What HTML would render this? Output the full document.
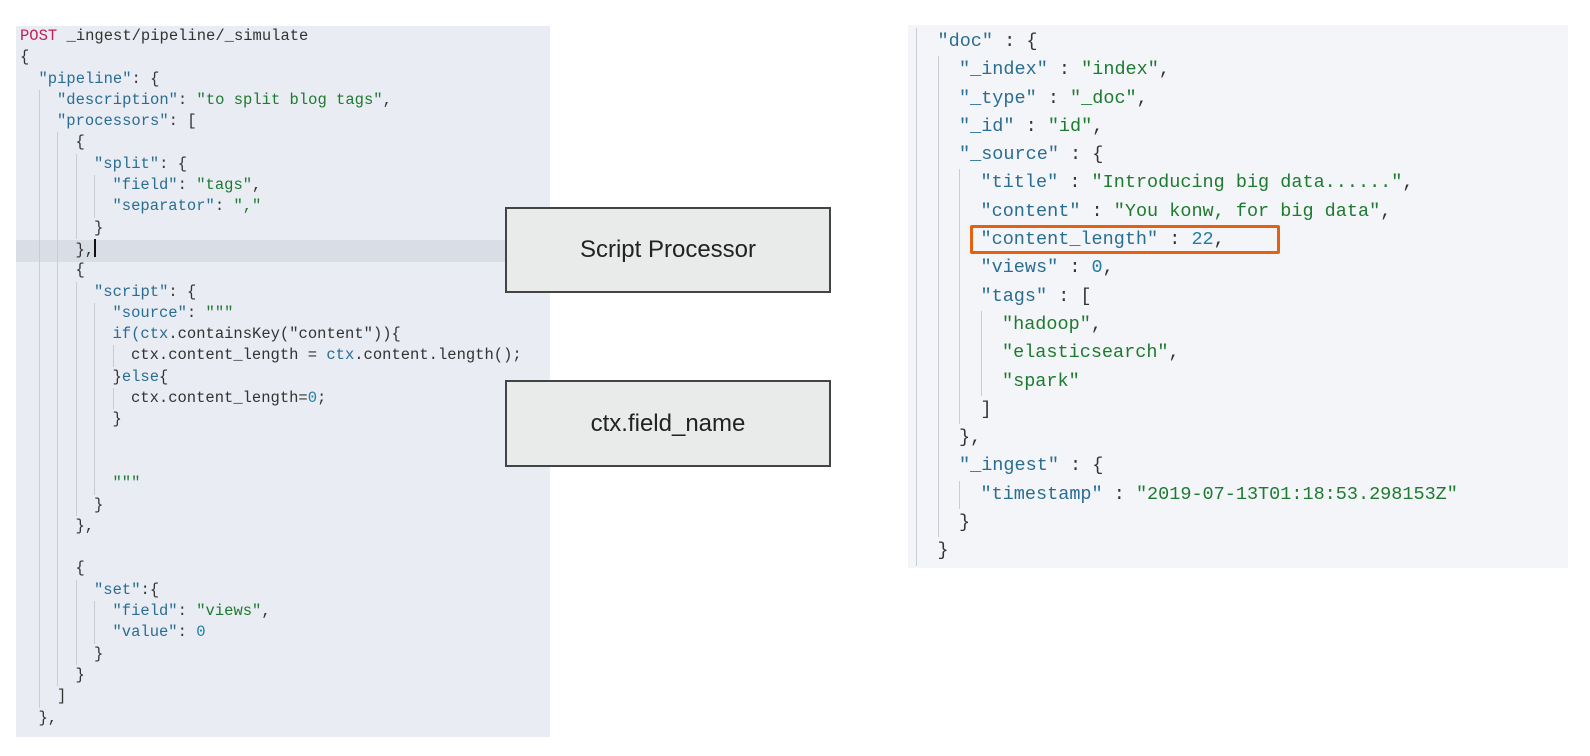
<!DOCTYPE html>
<html><head><meta charset="utf-8"><style>
html,body{margin:0;padding:0;background:#fff;width:1590px;height:756px;overflow:hidden;position:relative}
.panel{position:absolute}
#L{left:16px;top:26px;width:534px;height:711px;background:#e9ecf3}
#R{left:908px;top:25px;width:660px;height:543px;background:#f4f5f8}
.code{position:absolute;font-family:"Liberation Mono",monospace;color:#333}
.code div{white-space:pre}
#lc{left:20px;top:26px;font-size:15.5px;line-height:21.3px}
#rc{left:916px;top:28px;font-size:18.5px;line-height:28.3px}
#lc div{height:21.3px}
#rc div{height:28.3px}
.code b,.code i{display:inline-block;height:100%;vertical-align:top;box-sizing:border-box}
#lc b,#lc i{width:18.5px}
#rc i{width:21.5px}
.code i{border-left:1px solid #c9ccd3}
.k{color:#2a6d93}.s{color:#1d7a2f}.n{color:#1f7ea6}.m{color:#c21d55}
.hl{position:absolute;left:16px;top:240px;width:489px;height:22px;background:#d9dde6}
.cur{display:inline-block;width:2px;height:18px;background:#111;vertical-align:-3px}
.box{position:absolute;left:505px;width:326px;background:#e9ebeb;border:2px solid #444;font-family:"Liberation Sans",sans-serif;font-size:24px;color:#222;display:flex;align-items:center;justify-content:center;box-sizing:border-box}
.ob{position:absolute;left:970px;top:225px;width:310px;height:29px;border:3px solid #e4620f;border-radius:2px;box-sizing:border-box}
</style></head><body>
<div class="panel" id="L"></div>
<div class="hl"></div>
<div class="panel" id="R"></div>
<div class="code" id="lc"><div><span class="m">POST</span> _ingest/pipeline/_simulate</div><div>{</div><div><b></b><span class="k">"pipeline"</span>: {</div><div><b></b><i></i><span class="k">"description"</span>: <span class="s">"to split blog tags"</span>,</div><div><b></b><i></i><span class="k">"processors"</span>: [</div><div><b></b><i></i><i></i>{</div><div><b></b><i></i><i></i><i></i><span class="k">"split"</span>: {</div><div><b></b><i></i><i></i><i></i><i></i><span class="k">"field"</span>: <span class="s">"tags"</span>,</div><div><b></b><i></i><i></i><i></i><i></i><span class="k">"separator"</span>: <span class="s">","</span></div><div><b></b><i></i><i></i><i></i>}</div><div><b></b><i></i><i></i>},<span class="cur"></span></div><div><b></b><i></i><i></i>{</div><div><b></b><i></i><i></i><i></i><span class="k">"script"</span>: {</div><div><b></b><i></i><i></i><i></i><i></i><span class="k">"source"</span>: <span class="s">"""</span></div><div><b></b><i></i><i></i><i></i><i></i><span class="k">if(ctx</span>.containsKey("content")){</div><div><b></b><i></i><i></i><i></i><i></i><i></i>ctx.content_length = <span class="k">ctx</span>.content.length();</div><div><b></b><i></i><i></i><i></i><i></i>}<span class="k">else</span>{</div><div><b></b><i></i><i></i><i></i><i></i><i></i>ctx.content_length=<span class="n">0</span>;</div><div><b></b><i></i><i></i><i></i><i></i>}</div><div><b></b><i></i><i></i><i></i><i></i></div><div><b></b><i></i><i></i><i></i><i></i></div><div><b></b><i></i><i></i><i></i><i></i><span class="s">"""</span></div><div><b></b><i></i><i></i><i></i>}</div><div><b></b><i></i><i></i>},</div><div><b></b><i></i><i></i></div><div><b></b><i></i><i></i>{</div><div><b></b><i></i><i></i><i></i><span class="k">"set"</span>:{</div><div><b></b><i></i><i></i><i></i><i></i><span class="k">"field"</span>: <span class="s">"views"</span>,</div><div><b></b><i></i><i></i><i></i><i></i><span class="k">"value"</span>: <span class="n">0</span></div><div><b></b><i></i><i></i><i></i>}</div><div><b></b><i></i><i></i>}</div><div><b></b><i></i>]</div><div><b></b>},</div></div>
<div class="box" style="top:207px;height:86px">Script Processor</div>
<div class="box" style="top:380px;height:87px">ctx.field_name</div>
<div class="code" id="rc"><div><i></i><span class="k">"doc"</span> : {</div><div><i></i><i></i><span class="k">"_index"</span> : <span class="s">"index"</span>,</div><div><i></i><i></i><span class="k">"_type"</span> : <span class="s">"_doc"</span>,</div><div><i></i><i></i><span class="k">"_id"</span> : <span class="s">"id"</span>,</div><div><i></i><i></i><span class="k">"_source"</span> : {</div><div><i></i><i></i><i></i><span class="k">"title"</span> : <span class="s">"Introducing big data......"</span>,</div><div><i></i><i></i><i></i><span class="k">"content"</span> : <span class="s">"You konw, for big data"</span>,</div><div><i></i><i></i><i></i><span class="k">"content_length"</span> : <span class="n">22</span>,</div><div><i></i><i></i><i></i><span class="k">"views"</span> : <span class="n">0</span>,</div><div><i></i><i></i><i></i><span class="k">"tags"</span> : [</div><div><i></i><i></i><i></i><i></i><span class="s">"hadoop"</span>,</div><div><i></i><i></i><i></i><i></i><span class="s">"elasticsearch"</span>,</div><div><i></i><i></i><i></i><i></i><span class="s">"spark"</span></div><div><i></i><i></i><i></i>]</div><div><i></i><i></i>},</div><div><i></i><i></i><span class="k">"_ingest"</span> : {</div><div><i></i><i></i><i></i><span class="k">"timestamp"</span> : <span class="s">"2019-07-13T01:18:53.298153Z"</span></div><div><i></i><i></i>}</div><div><i></i>}</div></div>
<div class="ob"></div>
</body></html>
